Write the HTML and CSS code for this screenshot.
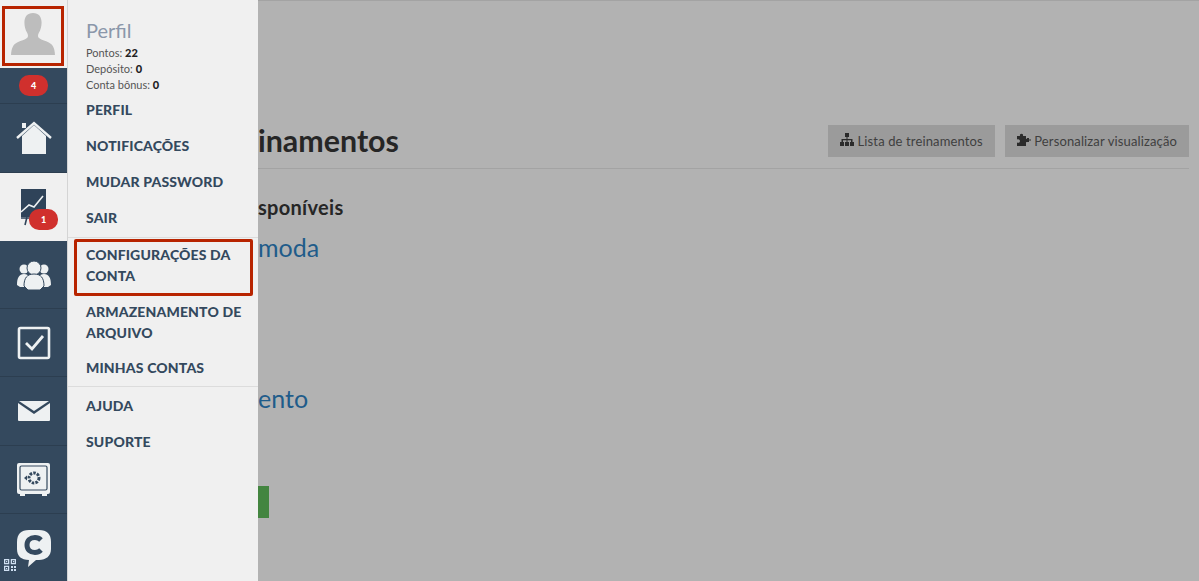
FILE: index.html
```html
<!DOCTYPE html>
<html>

<head>
    <title>Treinamentos</title>
    <meta name="viewport" content="width=device-width, initial-scale=1">
    <link rel="stylesheet" href="styles.css">
</head>
<body>
    <div class="sidebar">
        <div class="side-item side-avatar">
            <div class="avatar-box">
                <svg width="44" height="42" viewBox="0 0 46 44"><path fill="#bdbdbd" d="M23 0c-6 0-9 4-9 10 0 4 1 8 3 11 1 2 1 4 0 5-3 3-13 4-15 9-1 2-2 5-2 9h46c0-4-1-7-2-9-2-5-12-6-15-9-1-1-1-3 0-5 2-3 3-7 3-11 0-6-3-10-9-10z"/></svg>
            </div>
        </div>
        <div class="side-item side-count"><span class="badge">4</span></div>
        <div class="side-item side-tall">
            <svg width="36" height="34" viewBox="0 0 36 34"><path fill="#eef1f2" d="M6 15 18 4l12 11v18H6z"/><path fill="none" stroke="#eef1f2" stroke-width="2.4" d="M1 17 18 2l17 15"/><rect x="6" y="2" width="4" height="5" fill="#eef1f2"/></svg>
        </div>
        <div class="side-item side-active">
            <svg width="26" height="38" viewBox="0 0 26 38"><rect x="1" y="1" width="25" height="28" fill="#2f4359"/><path fill="none" stroke="#eef1f2" stroke-width="1.6" d="M1 24l8-7 5 2 9-11"/><path stroke="#2f4359" stroke-width="1.6" d="M5 37l2-8M1 30h20"/></svg>
            <span class="badge badge-over">1</span>
        </div>
        <div class="side-item">
            <svg width="34" height="30" viewBox="0 0 34 30"><g fill="#eef1f2"><circle cx="7" cy="9" r="4.500"/><circle cx="27" cy="9" r="4.500"/><path d="M0 25c0-7 2-11 7-11s7 4 7 11l-4 2H3zM20 25c0-7 2-11 7-11s7 4 7 11l-3 2h-7z"/><circle cx="17" cy="8" r="7" stroke="#34495e"/><path stroke="#34495e" d="M7 26c0-8 3-12 10-12s10 4 10 12l-4 4H11z"/></g></svg>
        </div>
        <div class="side-item">
            <svg width="34" height="34" viewBox="0 0 34 34"><rect x="2" y="2" width="30" height="30" rx="1.500" fill="none" stroke="#eef1f2" stroke-width="2.600"/><path fill="none" stroke="#eef1f2" stroke-width="2.800" d="M9 17l6 6 11-13"/></svg>
        </div>
        <div class="side-item side-tall">
            <svg width="32" height="20" viewBox="0 0 32 20"><path fill="#eef1f2" d="M1 0h30L16 10z"/><path fill="#eef1f2" d="M0 2l16 11L32 2v17a1 1 0 0 1-1 1H1a1 1 0 0 1-1-1z"/></svg>
        </div>
        <div class="side-item">
            <svg width="33" height="33" viewBox="0 0 33 33"><rect x="0" y="0" width="33" height="31" rx="2" fill="#eef1f2"/><rect x="3" y="3" width="27" height="24" rx="1.500" fill="none" stroke="#34495e" stroke-width="1.200"/><circle cx="17" cy="15" r="5" fill="none" stroke="#34495e" stroke-width="3" stroke-dasharray="2.500 1.200"/><path fill="#34495e" d="M7 15l3-2.500v5z"/><path fill="#eef1f2" d="M3 31h5v2H3zM25 31h5v2h-5z"/></svg>
        </div>
        <div class="side-item side-last">
            <svg width="34" height="37" viewBox="0 0 34 37"><path fill="#eef1f2" d="M12 0h10c8 0 12 4 12 12v7c0 7-5 11-12 11h-3l-8 7 1-7C4 30 0 26 0 19v-7C0 4 4 0 12 0z"/><path fill="none" stroke="#34495e" stroke-width="5" d="M24 10c-2-2-4-2.500-6-2.500-5 0-8 3-8 7.500s3 7.500 8 7.500c2 0 4-.5 6-2.500"/></svg>
            <svg class="qr-icon" width="12" height="12" viewBox="0 0 12 12"><path fill="none" stroke="#cfe0f2" stroke-width="1.300" d="M.6.600h4v4h-4zM7.400.600h4v4h-4zM.6 7.400h4v4h-4z"/><path fill="#cfe0f2" d="M2 2h1.200v1.200H2zM9 2h1.200v1.200H9zM2 9h1.200v1.200H2zM7 7h2v2H7zM10 7h2v2h-2zM7 10h2v2H7zM10 10h2v2h-2z"/></svg>
        </div>
    </div>

    <div class="menu">
        <div class="menu-head">
            <h3>Perfil</h3>
            <p>Pontos: <b>22</b></p>
            <p>Depósito: <b>0</b></p>
            <p>Conta bônus: <b>0</b></p>
        </div>
        <a class="menu-link">PERFIL</a>
        <a class="menu-link">NOTIFICAÇÕES</a>
        <a class="menu-link">MUDAR PASSWORD</a>
        <a class="menu-link">SAIR</a>
        <div class="menu-line"></div>
        <a class="menu-link menu-link-marked">CONFIGURAÇÕES DA CONTA</a>
        <a class="menu-link">ARMAZENAMENTO DE ARQUIVO</a>
        <a class="menu-link menu-link-tight">MINHAS CONTAS</a>
        <div class="menu-line menu-line-tight"></div>
        <a class="menu-link">AJUDA</a>
        <a class="menu-link">SUPORTE</a>
    </div>

    <div class="main">
        <div class="main-head">
            <h1>inamentos</h1>
            <div class="head-buttons">
                <button>
                    <svg width="14" height="13" viewBox="0 0 14 13"><path fill="#2b2b2b" d="M5 0h4v4H7.500v2H12.500v3H14v4h-4V9h1V7.200H7.500V9H9v4H5V9h1.500V7.200H3V9h1v4H0V9h1.500V6h5V4H5z"/></svg>
                    Lista de treinamentos
                </button>
                <button>
                    <svg width="14" height="13" viewBox="0 0 14 13"><path fill="#2b2b2b" d="M0 3h3c-1-3 4-3 3 0h3v3c3-1 3 4 0 3v4H0V9.500c2 1 3-.5 3-1.500S2 5.500 0 6.500zM10 5h2v1.500h2v1h-2V9h-2z"/></svg>
                    Personalizar visualização
                </button>
            </div>
        </div>
        <h2>sponíveis</h2>
        <a class="course-link">moda</a>
        <a class="course-link course-link-second">ento</a>
        <div class="green-button"></div>
    </div>
</body>

</html>
```

FILE: styles.css
```css
* {
    box-sizing: border-box;
}

body {
    display: flex;
    margin: 0;
    height: 581px;
    overflow: hidden;
    font-family: Lato, "Open Sans", Arial, sans-serif;
    background-color: #b2b2b2;
}

.sidebar {
    display: flex;
    flex-direction: column;
    flex: none;
    width: 67px;
    height: 581px;
    background-color: #34495e;
}

.side-item {
    position: relative;
    display: flex;
    align-items: center;
    justify-content: center;
    flex: none;
    height: 68px;
    border-bottom: 1px solid #2c3e50;
}

.side-tall {
    height: 69px;
}

.side-avatar {
    align-items: flex-start;
    background-color: #f0f0f0;
    border-bottom: 0;
    padding: 6px 3px 0 2px;
}

.avatar-box {
    display: flex;
    justify-content: center;
    width: 62px;
    height: 60px;
    padding-top: 4px;
    border: 3px solid #b82400;
}

.side-count {
    height: 36px;
}

.side-active {
    background-color: #f0f0f0;
    border-bottom: 0;
    padding-right: 1px;
}

.side-last {
    border-bottom: 0;
}

.badge {
    display: block;
    width: 29px;
    height: 21px;
    line-height: 21px;
    border-radius: 10px;
    background-color: #d0302d;
    color: #fff;
    font-size: 9px;
    font-weight: 900;
    text-align: center;
}

.badge-over {
    position: absolute;
    left: 29px;
    top: 36px;
}

.qr-icon {
    position: absolute;
    left: 4px;
    top: 45px;
}

.menu {
    flex: none;
    width: 191px;
    height: 581px;
    padding-top: 18px;
    background-color: #f0f0f0;
    border-left: 1px solid #d4d4d4;
    color: #34495e;
}

.menu-head {
    padding-left: 18px;
    margin-bottom: -2px;
}

.menu-head h3 {
    margin: 0 0 3px;
    font-size: 20px;
    line-height: 24px;
    font-weight: 400;
    color: #8b97aa;
}

.menu-head p {
    margin: 0;
    font-size: 11px;
    line-height: 16px;
    color: #555;
}

.menu-head b {
    color: #222;
    font-weight: 900;
}

.menu-link {
    display: block;
    padding: 8px 10px 7px 18px;
    font-size: 14px;
    line-height: 21px;
    font-weight: 900;
    letter-spacing: 0.15px;
    color: #34495e;
}

.menu-link-marked {
    margin: 1px 5px -3px 6px;
    padding: 2px 0 0 9px;
    height: 57px;
    border: 3px solid #b82400;
    border-radius: 2px;
}

.menu-link-tight {
    margin-top: -1px;
}

.menu-line {
    height: 1px;
    margin-top: 2px;
    background-color: #dcdcdc;
}

.menu-line-tight {
    margin-top: 1px;
}

.main {
    flex: 1;
    padding: 124px 10px 0 0;
    color: #262626;
    border-top: 1px solid #a3a3a3;
}

.main-head {
    display: flex;
    justify-content: space-between;
    height: 44px;
    border-bottom: 1px solid #a3a3a3;
}

.main-head h1 {
    margin: -1px 0 0;
    font-size: 30.4px;
    line-height: 32px;
    font-weight: 700;
}

.head-buttons {
    display: flex;
    gap: 10px;
}

.head-buttons button {
    height: 32px;
    padding: 0 12px;
    border: 0;
    background-color: #9b9b9b;
    color: #3f3f3f;
    font-family: inherit;
    font-size: 13px;
    letter-spacing: 0.13px;
}

.main h2 {
    margin: 26px 0 0;
    font-size: 20px;
    line-height: 24px;
    font-weight: 700;
    letter-spacing: 0.3px;
}

.course-link {
    display: block;
    margin-top: 13px;
    font-size: 25px;
    line-height: 30px;
    color: #1f5c8a;
}

.course-link-second {
    margin-top: 121px;
}

.green-button {
    width: 11px;
    height: 32px;
    margin-top: 73px;
    background-color: #438540;
}
```
